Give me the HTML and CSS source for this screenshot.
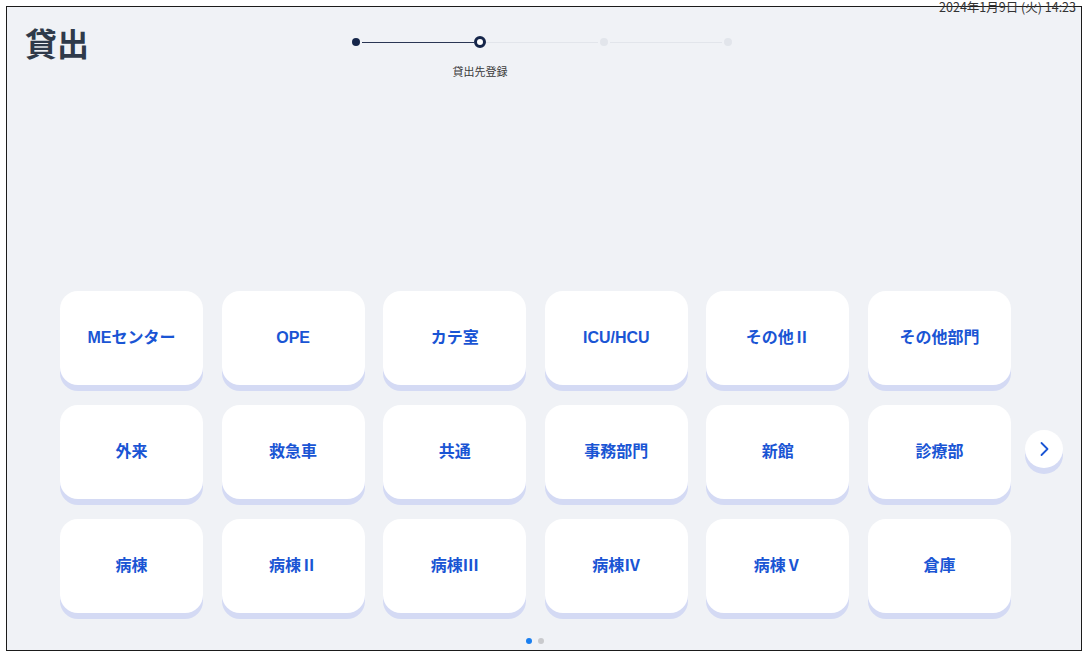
FILE: index.html
```html
<!doctype html>
<html lang="ja">
  <head>
    <meta charset="utf-8">
    <title>貸出</title>
    <link rel="stylesheet" href="styles.css">
  </head>
  <body>
    <div class="frame">
      <div class="clock">2024年1月9日 (火) 14:23</div>

      <div class="header">
        <h1 class="title">貸出</h1>

        <div class="stepper">
          <div class="step done">
            <span class="dot"></span>
          </div>
          <div class="line done"></div>
          <div class="step current">
            <span class="dot"></span>
            <span class="label">貸出先登録</span>
          </div>
          <div class="line"></div>
          <div class="step">
            <span class="dot"></span>
          </div>
          <div class="line"></div>
          <div class="step">
            <span class="dot"></span>
          </div>
        </div>
      </div>

      <div class="pager">
        <div class="grid">
          <button class="card">MEセンター</button>
          <button class="card">OPE</button>
          <button class="card">カテ室</button>
          <button class="card">ICU/HCU</button>
          <button class="card">その他Ⅱ</button>
          <button class="card">その他部門</button>
          <button class="card">外来</button>
          <button class="card">救急車</button>
          <button class="card">共通</button>
          <button class="card">事務部門</button>
          <button class="card">新館</button>
          <button class="card">診療部</button>
          <button class="card">病棟</button>
          <button class="card">病棟Ⅱ</button>
          <button class="card">病棟Ⅲ</button>
          <button class="card">病棟Ⅳ</button>
          <button class="card">病棟Ⅴ</button>
          <button class="card">倉庫</button>
        </div>
        <button class="next" aria-label="次へ">
          <svg width="20" height="20" viewBox="0 0 20 20">
            <polyline points="7.5 4 13.5 10 7.5 16" fill="none" stroke="#1a55d4" stroke-width="1.8" stroke-linecap="round" stroke-linejoin="round"/>
          </svg>
        </button>
      </div>

      <div class="dots">
        <span class="page-dot active"></span>
        <span class="page-dot"></span>
      </div>
    </div>
  </body>
</html>
```

FILE: styles.css
```css
html, body {
  margin: 0;
  padding: 0;
  background: #ffffff;
}

body {
  font-family: "Liberation Sans", "Noto Sans CJK JP", sans-serif;
}

.frame {
  position: relative;
  box-sizing: border-box;
  width: 1076px;
  height: 645px;
  margin: 6px 5px 0 6px;
  border: 1px solid #1b1b1b;
  background: #f0f2f6;
  display: flex;
  flex-direction: column;
}

.clock {
  position: absolute;
  top: -8px;
  right: 5px;
  font-family: "Noto Sans CJK JP", sans-serif;
  font-size: 12.5px;
  line-height: 16px;
  color: #333333;
}

.header {
  display: flex;
  align-items: flex-start;
  padding: 19px 0 0 18px;
}

.title {
  margin: 0;
  width: 66px;
  font-family: "Noto Sans CJK JP", sans-serif;
  font-size: 32px;
  line-height: 32px;
  font-weight: 700;
  color: #2f3a4a;
}

.stepper {
  display: flex;
  align-items: flex-start;
  margin: 10px 0 0 259px;
}

.step {
  width: 12px;
  display: flex;
  flex-direction: column;
  align-items: center;
}

.step .dot {
  box-sizing: border-box;
  display: block;
  width: 8px;
  height: 8px;
  margin: 2px 0;
  border-radius: 50%;
  background: #e2e5eb;
}

.step.done .dot {
  background: #16264a;
}

.step.current .dot {
  width: 12px;
  height: 12px;
  margin: 0;
  background: #ffffff;
  border: 3.5px solid #16264a;
}

.step .label {
  margin-top: 15px;
  white-space: nowrap;
  font-family: "Noto Sans CJK JP", sans-serif;
  font-size: 11px;
  line-height: 16px;
  color: #3a3a3a;
}

.line {
  width: 112px;
  height: 1px;
  margin-top: 5.5px;
  background: #e2e5eb;
}

.line.done {
  background: #2a3654;
}

.pager {
  display: flex;
  align-items: center;
  margin: 212px 0 0 53px;
}

.grid {
  display: grid;
  grid-template-columns: repeat(6, 143px);
  grid-auto-rows: 94px;
  column-gap: 18.6px;
  row-gap: 20px;
}

.card {
  border: 0;
  border-radius: 18px;
  background: #ffffff;
  box-shadow: 0 6px 0 #d4daf4;
  font-family: "Liberation Sans", "Noto Sans CJK JP", sans-serif;
  font-size: 16px;
  line-height: 20px;
  font-weight: 700;
  color: #1a55d4;
  padding: 0;
  cursor: pointer;
}

.next {
  width: 38px;
  height: 38px;
  margin-left: 14px;
  margin-top: -6px;
  padding: 0;
  border: 0;
  border-radius: 50%;
  background: #ffffff;
  box-shadow: 0 6px 0 #d4daf4;
  display: flex;
  align-items: center;
  justify-content: center;
}

.dots {
  display: flex;
  gap: 6px;
  margin: 25px 0 0 519px;
}

.page-dot {
  width: 6px;
  height: 6px;
  border-radius: 50%;
  background: #c9cacd;
}

.page-dot.active {
  background: #1a7ff0;
}
```
